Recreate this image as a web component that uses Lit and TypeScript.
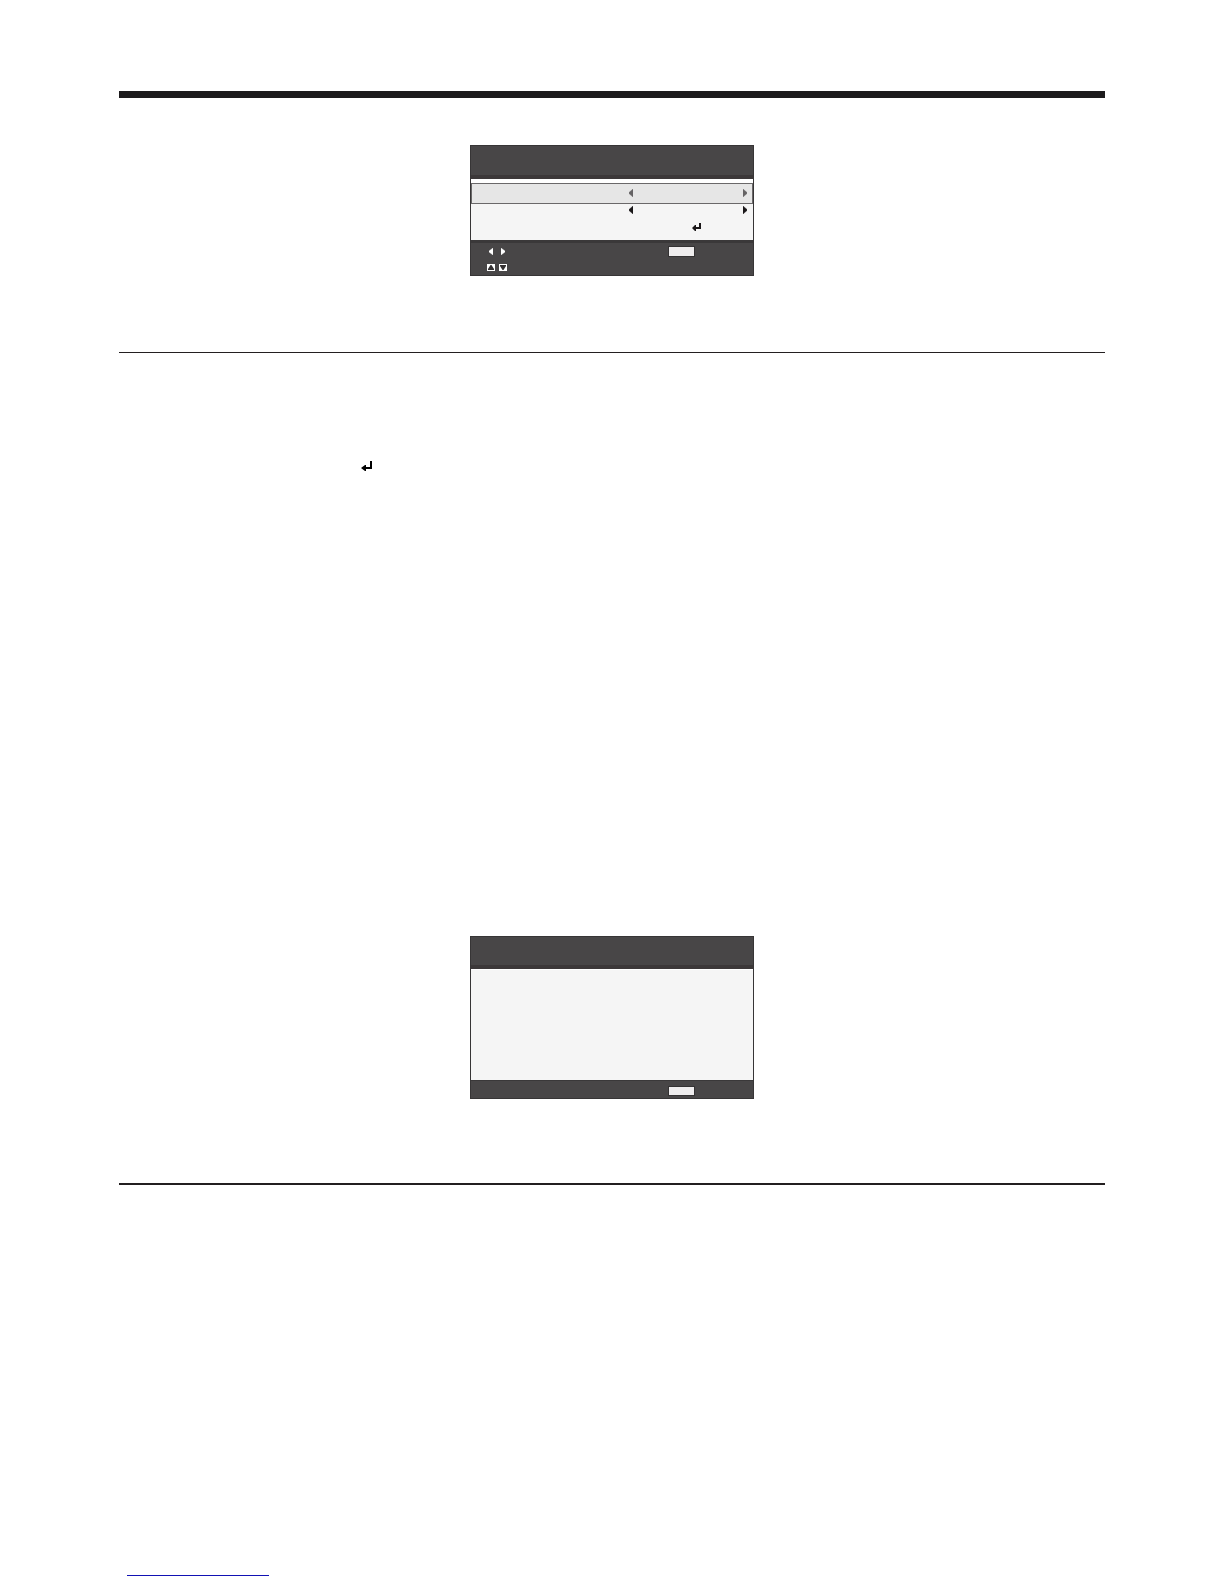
import { LitElement, html, svg, css } from "lit";
import { customElement, property } from "lit/decorators.js";

const shapes = {
  left: svg`<path d="M4 0V8L0 4.5V3.5Z"/>`,
  right: svg`<path d="M0 0V8L4 4.5V3.5Z"/>`,
};

const arrow = (dir: "left" | "right", height = 8) =>
  html`<svg width="4" height=${height} viewBox="0 0 4 8" preserveAspectRatio="none" fill="currentColor" stroke="currentColor" stroke-width="0.4" aria-hidden="true">${shapes[dir]}</svg>`;

const enter = html`<svg width="11" height="10" viewBox="0 0 11 10" fill="currentColor" aria-hidden="true">
  <path d="M9 0H11V8H5V10H4L0 7L4 4H5V6H9Z"/>
</svg>`;

const enterSmall = html`<svg width="9" height="8" viewBox="0 0 9 8" fill="currentColor" aria-hidden="true">
  <path d="M7 0H9V6H4V8H3L0 5L3 2H4V4H7Z"/>
</svg>`;

@customElement("osd-panel")
export class OsdPanel extends LitElement {
  static styles = css`
    :host {
      display: block;
      width: 284px;
      max-width: 100%;
      box-sizing: border-box;
      border: 1px solid #373536;
      background: #484647;
    }
    .head {
      height: 33px;
      box-sizing: border-box;
      border-bottom: 4px solid #3c3839;
    }
    :host([compact]) .head {
      height: 32px;
    }
    .body {
      background: #f5f5f5;
    }
    .foot {
      border-top: 3px solid #3a3839;
    }
    :host([compact]) .foot {
      border-top: 1px solid #3a3839;
    }
  `;

  @property({ type: Boolean, reflect: true }) compact = false;

  render() {
    return html`
      <div class="head"></div>
      <div class="body"><slot></slot></div>
      <div class="foot"><slot name="foot"></slot></div>
    `;
  }
}

@customElement("app-root")
export class AppRoot extends LitElement {
  static styles = css`
    :host {
      display: block;
      background: #fff;
      color: #1a1718;
      font-family: "Liberation Sans", sans-serif;
    }
    main {
      padding: 91px 119px 8px;
    }
    svg {
      display: block;
    }
    button {
      display: block;
      padding: 0;
      border: 0;
      background: none;
      color: inherit;
    }
    hr {
      margin: 0;
      border: 0;
      height: 1px;
      background: #231f20;
    }
    .bar {
      height: 7px;
      background: #1d1b1d;
    }
    .double {
      height: 2px;
    }
    .settings {
      padding: 47px 0 76px;
    }
    .enter {
      padding: 108px 0 465px 242px;
      color: #000;
    }
    .status {
      padding-bottom: 84px;
    }
    osd-panel {
      margin: 0 auto;
    }
    .rows {
      border-top: 4px solid #fff;
      padding-bottom: 2px;
    }
    .row {
      display: flex;
      align-items: center;
      justify-content: flex-end;
      height: 12px;
      padding-right: 6px;
    }
    .selected {
      height: 18px;
      padding: 0 5px 1px 0;
      border: 1px solid #6a6869;
      background: #e6e6e6;
      color: #656364;
    }
    .confirm {
      height: 22px;
      padding-right: 52px;
    }
    .choice {
      display: flex;
      justify-content: space-between;
      width: 118px;
    }
    .hints {
      display: flex;
      align-items: center;
      gap: 4px;
      height: 17px;
      padding: 0 58px 0 16px;
      color: #fff;
    }
    .last {
      height: 15px;
    }
    .key {
      display: grid;
      place-items: center;
      width: 8px;
      height: 7px;
    }
    .boxed {
      background: #fff;
      color: #343132;
    }
    .menu {
      width: 27px;
      height: 11px;
      margin-left: auto;
      border: 1px solid #343233;
      background: #efedee;
    }
    .blank {
      height: 106px;
      border-top: 1px solid #fff;
      padding-bottom: 4px;
    }
    .compact {
      height: 14px;
      padding-top: 3px;
    }
    .compact .menu {
      height: 10px;
    }
    .link {
      display: block;
      width: 142px;
      height: 390px;
      margin-left: 8px;
      border-bottom: 1px solid #1212b4;
    }
  `;

  private choice(selected: boolean) {
    return html`
      <div class="row ${selected ? "selected" : ""}">
        <div class="choice">
          <button aria-label="Previous">${arrow("left")}</button>
          <button aria-label="Next">${arrow("right")}</button>
        </div>
      </div>
    `;
  }

  render() {
    return html`
      <main>
        <hr class="bar" />
        <section class="settings">
          <osd-panel>
            <div class="rows">
              ${this.choice(true)} ${this.choice(false)}
              <div class="row confirm"><button aria-label="Enter">${enterSmall}</button></div>
            </div>
            <div slot="foot">
              <div class="hints">
                <span class="key">${arrow("left", 7)}</span>
                <span class="key">${arrow("right", 7)}</span>
                <button class="menu" aria-label="Menu"></button>
              </div>
              <div class="hints last">
                <span class="key boxed">
                  <svg width="6" height="5" viewBox="0 0 6 5" fill="currentColor" aria-hidden="true"><path d="M0 4L2.5 0H3.5L6 4V5H0Z"/></svg>
                </span>
                <span class="key boxed">
                  <svg width="6" height="5" viewBox="0 0 6 5" fill="currentColor" aria-hidden="true"><path d="M0 0H6V1L3.5 5H2.5L0 1Z"/></svg>
                </span>
              </div>
            </div>
          </osd-panel>
        </section>
        <hr />
        <section class="enter">${enter}</section>
        <section class="status">
          <osd-panel compact>
            <div class="blank"></div>
            <div slot="foot" class="hints compact">
              <button class="menu" aria-label="Menu"></button>
            </div>
          </osd-panel>
        </section>
        <hr class="double" />
        <a class="link" href="#top" aria-label="Back to top"></a>
      </main>
    `;
  }
}
